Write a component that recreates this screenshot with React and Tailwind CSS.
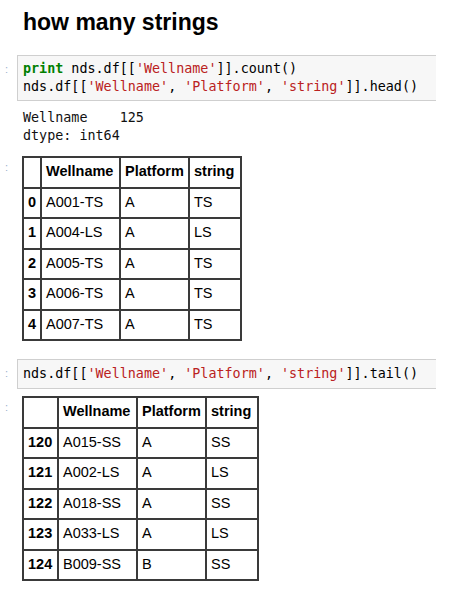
import React from "react";

const headRows = [
  ["0", "A001-TS", "A", "TS"],
  ["1", "A004-LS", "A", "LS"],
  ["2", "A005-TS", "A", "TS"],
  ["3", "A006-TS", "A", "TS"],
  ["4", "A007-TS", "A", "TS"],
];

const tailRows = [
  ["120", "A015-SS", "A", "SS"],
  ["121", "A002-LS", "A", "LS"],
  ["122", "A018-SS", "A", "SS"],
  ["123", "A033-LS", "A", "LS"],
  ["124", "B009-SS", "B", "SS"],
];

const Prompt = ({ className = "" }) => (
  <div className={"w-[17px] shrink-0 pl-[5px] text-[11px] leading-[18px] text-[#9bb0cc] " + className}>
    :
  </div>
);

const Str = ({ children }) => <span className="text-[#ba2121]">{children}</span>;

const CodeCell = ({ children, className = "" }) => (
  <div className={"flex " + className}>
    <Prompt className="pt-[5px]" />
    <div className="w-[419px] border border-r-0 border-[#cfcfcf] bg-[#f7f7f7] pl-[5px] font-['DejaVu_Sans_Mono',monospace] text-[13.4px] leading-[18px] text-black">
      {children}
    </div>
  </div>
);

const Frame = ({ rows, cols, className = "" }) => (
  <div className={"flex " + className}>
    <Prompt className="pt-[2px] w-[22px]" />
    <div className={"grid border-l-2 border-t-2 border-[#3a3a3a] auto-rows-[30.5px] text-[14.5px] text-black " + cols}>
      {["", "Wellname", "Platform", "string"].map((h, i) => (
        <div key={i} className="flex items-center border-r-2 border-b-2 border-[#3a3a3a] pl-[4px] font-bold">
          {h}
        </div>
      ))}
      {rows.map((r) =>
        r.map((c, i) => (
          <div
            key={r[0] + i}
            className={
              "flex items-center border-r-2 border-b-2 border-[#3a3a3a] pl-[4px] " +
              (i === 0 ? "font-bold" : "")
            }
          >
            {c}
          </div>
        ))
      )}
    </div>
  </div>
);

export default function App() {
  return (
    <div className="w-[468px] h-[605px] overflow-hidden bg-white font-['Liberation_Sans',Arial,sans-serif]">
      <h2 className="pl-[23px] pt-[9px] text-[23px] leading-[26px] font-bold text-black">how many strings</h2>

      <CodeCell className="mt-[20px]">
        <div className="py-[4px]">
          <div>
            <span className="font-bold text-[#008000]">print</span> nds.df[[<Str>'Wellname'</Str>]].count()
          </div>
          <div>
            nds.df[[<Str>'Wellname'</Str>, <Str>'Platform'</Str>, <Str>'string'</Str>]].head()
          </div>
        </div>
      </CodeCell>

      <div className="mt-[8px] pl-[23px] font-['DejaVu_Sans_Mono',monospace] text-[13.4px] leading-[17.5px] text-[#111] whitespace-pre">
        <div>Wellname    125</div>
        <div>dtype: int64</div>
      </div>

      <Frame rows={headRows} cols="grid-cols-[18px_79px_69px_52px]" className="mt-[12px]" />

      <CodeCell className="mt-[18px]">
        <div className="py-[5px]">
          nds.df[[<Str>'Wellname'</Str>, <Str>'Platform'</Str>, <Str>'string'</Str>]].tail()
        </div>
      </CodeCell>

      <Frame rows={tailRows} cols="grid-cols-[35px_79px_69px_52px]" className="mt-[7px]" />
    </div>
  );
}
